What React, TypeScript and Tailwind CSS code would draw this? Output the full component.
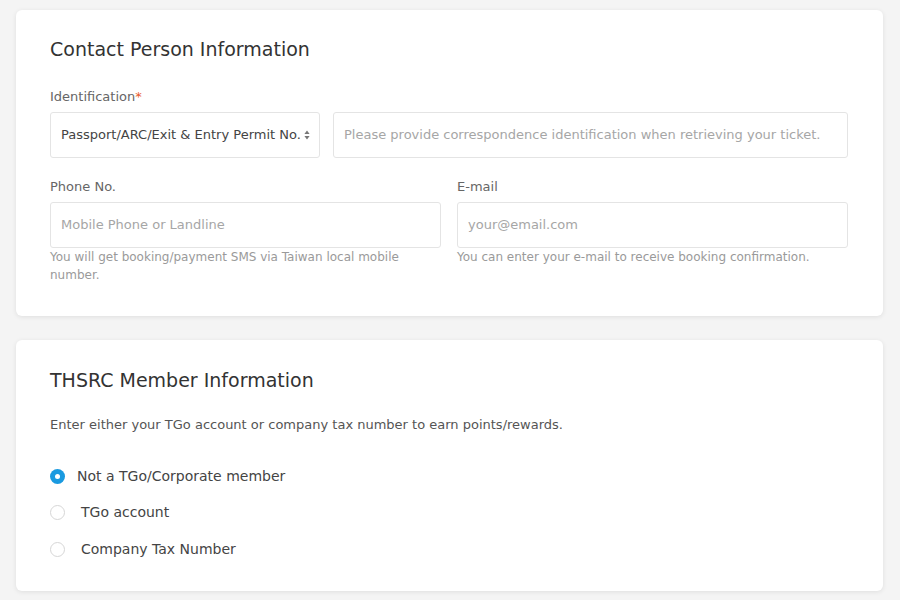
import React from "react";

const font = { fontFamily: '"DejaVu Sans", "Noto Sans", sans-serif' };

function Radio({ checked, label, pad }: { checked?: boolean; label: string; pad: string }) {
  return (
    <label className="flex items-center h-[36.5px]">
      {checked ? (
        <span className="w-[15px] h-[15px] rounded-full bg-[#1a9ae0] flex items-center justify-center">
          <span className="w-[5px] h-[5px] rounded-full bg-white" />
        </span>
      ) : (
        <span className="w-[15px] h-[15px] rounded-full border border-[#d6d6d6] bg-white" />
      )}
      <span className={`${pad} text-[14px] text-[#444]`}>{label}</span>
    </label>
  );
}

export default function App() {
  return (
    <div className="min-h-[600px] bg-[#f4f4f4] pl-4 pr-[17px] pt-[10px]" style={font}>
      {/* Contact person */}
      <section className="bg-white rounded-md shadow-[0_1px_5px_rgba(0,0,0,0.09)] pl-[34px] pr-[35px] pt-[26px] pb-[32px]">
        <h2 className="text-[19px] text-[#333] leading-[26px]">Contact Person Information</h2>

        <div className="mt-[26px] text-[13px] text-[#666] leading-[18px]">
          Identification<span className="text-[#e8592b]">*</span>
        </div>
        <div className="mt-[6px] flex gap-[13px]">
          <div className="w-[270px] h-[46px] border border-[#e4e4e4] rounded-[3px] flex items-center justify-between pl-[10px] pr-[9px] text-[13px] text-[#444]">
            <span>Passport/ARC/Exit &amp; Entry Permit No.</span>
            <svg width="6" height="10" viewBox="0 0 6 10">
              <path d="M3 0.5 L5.6 4 H0.4 Z M3 9.5 L0.4 6 H5.6 Z" fill="#777" />
            </svg>
          </div>
          <div className="flex-1 h-[46px] border border-[#e4e4e4] rounded-[3px] flex items-center px-[10px] text-[13px] text-[#a6a6a6]">
            Please provide correspondence identification when retrieving your ticket.
          </div>
        </div>

        <div className="mt-[20px] grid grid-cols-2 gap-[16px]">
          <div>
            <div className="text-[13px] text-[#666] leading-[18px]">Phone No.</div>
            <div className="mt-[6px] h-[46px] border border-[#e4e4e4] rounded-[3px] flex items-center px-[10px] text-[13px] text-[#a6a6a6]">
              Mobile Phone or Landline
            </div>
            <p className="text-[12px] leading-[18px] text-[#9a9a9a] pr-[24px]">
              You will get booking/payment SMS via Taiwan local mobile number.
            </p>
          </div>
          <div>
            <div className="text-[13px] text-[#666] leading-[18px]">E-mail</div>
            <div className="mt-[6px] h-[46px] border border-[#e4e4e4] rounded-[3px] flex items-center px-[10px] text-[13px] text-[#a6a6a6]">
              your@email.com
            </div>
            <p className="text-[12px] leading-[18px] text-[#9a9a9a]">
              You can enter your e-mail to receive booking confirmation.
            </p>
          </div>
        </div>
      </section>

      {/* Member */}
      <section className="mt-[24px] bg-white rounded-md shadow-[0_1px_5px_rgba(0,0,0,0.09)] px-[34px] pt-[27px] pb-[23px]">
        <h2 className="text-[19px] text-[#333] leading-[26px]">THSRC Member Information</h2>
        <p className="mt-[23px] text-[13px] text-[#555] leading-[18px]">
          Enter either your TGo account or company tax number to earn points/rewards.
        </p>
        <div className="mt-[24px] flex flex-col">
          <Radio checked label="Not a TGo/Corporate member" pad="pl-[12px]" />
          <Radio label="TGo account" pad="pl-[16px]" />
          <Radio label="Company Tax Number" pad="pl-[16px]" />
        </div>
      </section>
    </div>
  );
}
